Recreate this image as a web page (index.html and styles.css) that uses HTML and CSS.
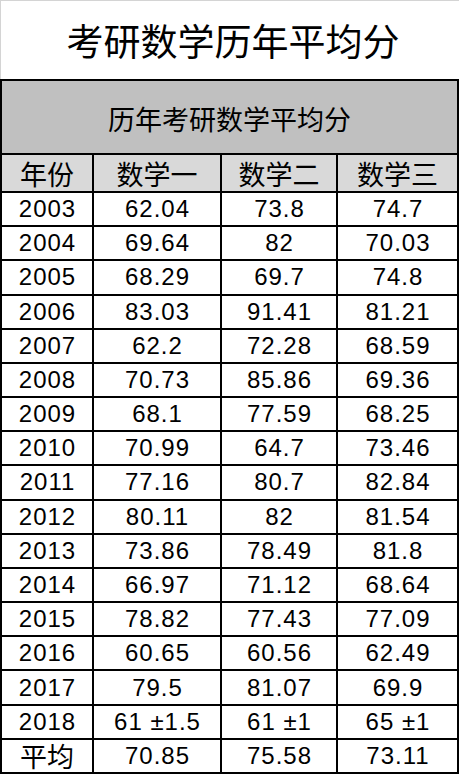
FILE: index.html
```html
<!DOCTYPE html>
<html lang="zh">
<head>
<meta charset="utf-8">
<title>考研数学历年平均分</title>
<link rel="stylesheet" href="styles.css">
</head>
<body>
<div class="page">
  <div class="title">考研数学历年平均分</div>
  <div class="table">
    <div class="cell caption">历年考研数学平均分</div>
    <div class="cell head">年份</div>
    <div class="cell head">数学一</div>
    <div class="cell head">数学二</div>
    <div class="cell head">数学三</div>

    <div class="cell num">2003</div><div class="cell num">62.04</div><div class="cell num">73.8</div><div class="cell num">74.7</div>
    <div class="cell num">2004</div><div class="cell num">69.64</div><div class="cell num">82</div><div class="cell num">70.03</div>
    <div class="cell num">2005</div><div class="cell num">68.29</div><div class="cell num">69.7</div><div class="cell num">74.8</div>
    <div class="cell num">2006</div><div class="cell num">83.03</div><div class="cell num">91.41</div><div class="cell num">81.21</div>
    <div class="cell num">2007</div><div class="cell num">62.2</div><div class="cell num">72.28</div><div class="cell num">68.59</div>
    <div class="cell num">2008</div><div class="cell num">70.73</div><div class="cell num">85.86</div><div class="cell num">69.36</div>
    <div class="cell num">2009</div><div class="cell num">68.1</div><div class="cell num">77.59</div><div class="cell num">68.25</div>
    <div class="cell num">2010</div><div class="cell num">70.99</div><div class="cell num">64.7</div><div class="cell num">73.46</div>
    <div class="cell num">2011</div><div class="cell num">77.16</div><div class="cell num">80.7</div><div class="cell num">82.84</div>
    <div class="cell num">2012</div><div class="cell num">80.11</div><div class="cell num">82</div><div class="cell num">81.54</div>
    <div class="cell num">2013</div><div class="cell num">73.86</div><div class="cell num">78.49</div><div class="cell num">81.8</div>
    <div class="cell num">2014</div><div class="cell num">66.97</div><div class="cell num">71.12</div><div class="cell num">68.64</div>
    <div class="cell num">2015</div><div class="cell num">78.82</div><div class="cell num">77.43</div><div class="cell num">77.09</div>
    <div class="cell num">2016</div><div class="cell num">60.65</div><div class="cell num">60.56</div><div class="cell num">62.49</div>
    <div class="cell num">2017</div><div class="cell num">79.5</div><div class="cell num">81.07</div><div class="cell num">69.9</div>
    <div class="cell num">2018</div><div class="cell num">61 ±1.5</div><div class="cell num">61 ±1</div><div class="cell num">65 ±1</div>
    <div class="cell cjk">平均</div><div class="cell num">70.85</div><div class="cell num">75.58</div><div class="cell num">73.11</div>
  </div>
</div>
</body>
</html>
```

FILE: styles.css
```css
* { box-sizing: border-box; }
html, body { margin: 0; padding: 0; background: #fff; }
body {
  width: 459px;
  height: 775px;
  overflow: hidden;
  font-family: "Liberation Sans", "Noto Sans CJK SC", sans-serif;
  color: #000;
}
.page {
  display: flex;
  flex-direction: column;
}
.title {
  height: 79px;
  border-top: 1px solid #d4d4d4;
  border-left: 1px solid #d4d4d4;
  display: flex;
  align-items: center;
  justify-content: center;
  padding-left: 6px;
  font-family: "Noto Sans CJK SC", sans-serif;
  font-size: 37px;
  line-height: 1;
}
.table {
  display: grid;
  grid-template-columns: 90px 126px 114px 119px;
  grid-template-rows: 72px 36px repeat(17, 1fr);
  gap: 2px;
  padding: 2px;
  height: 695px;
  background: #000;
}
.cell {
  background: #fff;
  display: flex;
  align-items: center;
  justify-content: center;
  line-height: 1;
  white-space: pre;
}
.caption {
  grid-column: 1 / -1;
  background: #c0c0c0;
  font-family: "Noto Sans CJK SC", sans-serif;
  font-size: 27px;
  padding-top: 2px;
}
.head {
  background: #d9d9d9;
  font-family: "Noto Sans CJK SC", sans-serif;
  font-size: 27px;
}
.cjk {
  font-family: "Noto Sans CJK SC", sans-serif;
  font-size: 27px;
}
.num {
  font-size: 24px;
  letter-spacing: 1px;
  padding-left: 1px;
}
```
